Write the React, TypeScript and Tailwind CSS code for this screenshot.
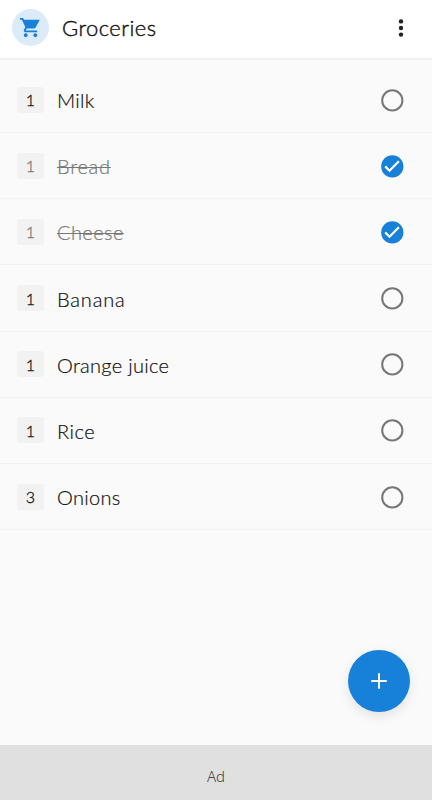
import React from "react";

type Item = { name: string; quantity: number; done: boolean; spacing: string };

const items: Item[] = [
  { name: "Milk", quantity: 1, done: false, spacing: "tracking-[0.3px]" },
  { name: "Bread", quantity: 1, done: true, spacing: "tracking-[0.75px]" },
  { name: "Cheese", quantity: 1, done: true, spacing: "tracking-[0.4px]" },
  { name: "Banana", quantity: 1, done: false, spacing: "tracking-[0.85px]" },
  { name: "Orange juice", quantity: 1, done: false, spacing: "tracking-[0.3px]" },
  { name: "Rice", quantity: 1, done: false, spacing: "tracking-[0.5px]" },
  { name: "Onions", quantity: 3, done: false, spacing: "tracking-[0.3px]" },
];

function CartIcon() {
  return (
    <svg viewBox="0 0 24 24" className="size-[23px] fill-[#1780d9]">
      <path d="M7 18c-1.1 0-1.99.9-1.99 2S5.9 22 7 22s2-.9 2-2-.9-2-2-2zM1 2v2h2l3.6 7.59-1.35 2.45c-.16.28-.25.61-.25.96 0 1.1.9 2 2 2h12v-2H7.42c-.14 0-.25-.11-.25-.25l.03-.12.9-1.63h7.45c.75 0 1.41-.41 1.75-1.03L21.7 4H5.21l-.94-2H1zm16 16c-1.1 0-1.99.9-1.99 2s.89 2 1.99 2 2-.9 2-2-.9-2-2-2z" />
    </svg>
  );
}

function Check({ done }: { done: boolean }) {
  return done ? (
    <svg viewBox="0 0 24 24" className="size-6">
      <circle cx="12.3" cy="12.4" r="11.1" fill="#1780d9" />
      <path d="M5.2 12.4l4.3 4.3 9.4-9.4" fill="none" stroke="#fff" strokeWidth="2.3" />
    </svg>
  ) : (
    <svg viewBox="0 0 24 24" className="size-6">
      <circle cx="12.3" cy="12.4" r="10.1" fill="none" stroke="#777" strokeWidth="2" />
    </svg>
  );
}

function Row({ item }: { item: Item }) {
  return (
    <li className="flex h-[66.17px] items-center border-b border-[#f2f2f2] pl-[17px] pr-[28px]">
      <span
        className={`flex h-[26px] w-[27px] items-center justify-center rounded-[3px] bg-[#f2f2f2] pt-px text-base font-light [-webkit-text-stroke:0.3px] ${
          item.done ? "text-[#777]" : "text-[#111]"
        }`}
      >
        {item.quantity}
      </span>
      <span
        className={`ml-[13px] flex-1 pt-px text-[20px] leading-6 font-light [-webkit-text-stroke:0.2px] ${item.spacing} ${
          item.done ? "text-[#777] line-through decoration-1" : "text-[#111]"
        }`}
      >
        {item.name}
      </span>
      <Check done={item.done} />
    </li>
  );
}

export default function App() {
  return (
    <div className="relative flex h-[800px] w-[432px] flex-col overflow-hidden bg-[#fafafa] font-['Lato',sans-serif]">
      <header className="flex h-[60px] items-center border-b-2 border-[#f0f0f0] bg-white pb-[3px] pl-[11.5px] pr-[19px]">
        <span className="flex size-[37.5px] items-center justify-center rounded-full bg-[#dcebf9]">
          <CartIcon />
        </span>
        <h1 className="ml-[13px] flex-1 pt-px text-[22px] leading-7 font-light tracking-[0.45px] text-[#111] [-webkit-text-stroke:0.4px]">
          Groceries
        </h1>
        <button className="flex w-6 justify-center" aria-label="More options">
          <svg viewBox="0 0 24 24" className="size-6 fill-[#222]">
            <circle cx="12" cy="5.4" r="2.2" />
            <circle cx="12" cy="12" r="2.2" />
            <circle cx="12" cy="18.6" r="2.2" />
          </svg>
        </button>
      </header>
      <main className="flex-1 pt-[7px]">
        <ul>
          {items.map((item) => (
            <Row key={item.name} item={item} />
          ))}
        </ul>
      </main>
      <button
        aria-label="Add item"
        className="absolute right-[22px] bottom-[88px] flex size-[62px] items-center justify-center rounded-full bg-[#1780d9] shadow-[0_4px_12px_rgba(0,0,0,0.1)]"
      >
        <svg viewBox="0 0 16 16" className="size-4">
          <path d="M8 1v14M1 8h14" stroke="#fff" strokeWidth="2" strokeLinecap="round" />
        </svg>
      </button>
      <footer className="flex h-[55px] items-center justify-center bg-[#e0e0e0] pt-[8px] font-['Noto_Sans',sans-serif] text-[15px] font-light text-[#444]">
        Ad
      </footer>
    </div>
  );
}
